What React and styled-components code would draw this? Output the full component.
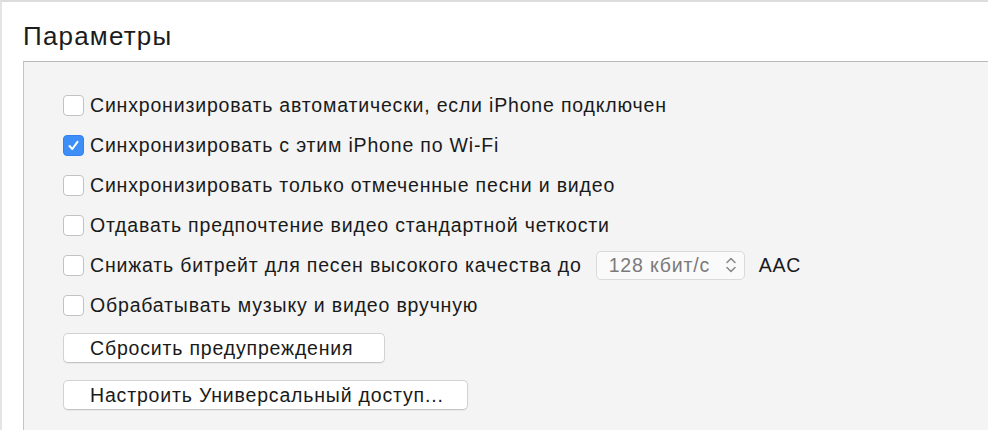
import React, { useState } from 'react';
import styled, { createGlobalStyle } from 'styled-components';

const GlobalStyle = createGlobalStyle`
  html, body {
    margin: 0;
    padding: 0;
    background: #ffffff;
    overflow: hidden;
  }
  body {
    font-family: "Liberation Sans", Arial, sans-serif;
    color: #1a1a1a;
  }
`;

const Window = styled.div`
  width: 988px;
  height: 430px;
  box-sizing: border-box;
  border-top: 2px solid #dcdcdc;
  border-left: 2px solid #e4e4e4;
  background: #ffffff;
  padding: 20px 0 0 21px;
  overflow: hidden;
`;

const Title = styled.h1`
  margin: 0 0 11px 0;
  font-size: 26px;
  font-weight: 400;
  letter-spacing: 1.2px;
  line-height: 28px;
  color: #1c1c1c;
`;

const Panel = styled.div`
  box-sizing: border-box;
  width: 1000px;
  height: 400px;
  background: #f4f4f4;
  border-top: 1px solid #b9b9b9;
  border-left: 1px solid #c4c4c4;
  padding: 23px 0 0 39px;
  display: flex;
  flex-direction: column;
`;

const Row = styled.label`
  display: flex;
  align-items: center;
  gap: 6px;
  height: 40px;
  font-size: 19.5px;
  letter-spacing: 0.82px;
  cursor: default;
`;

const Box = styled.span`
  box-sizing: border-box;
  width: 21px;
  height: 21px;
  border-radius: 4px;
  flex-shrink: 0;
  display: flex;
  align-items: center;
  justify-content: center;
  background: ${p => (p.$checked ? '#3d8ff7' : '#ffffff')};
  border: 1px solid ${p => (p.$checked ? '#3282ee' : '#c2c2c2')};
`;

const Select = styled.div`
  box-sizing: border-box;
  margin-left: 8px;
  width: 149px;
  height: 29px;
  border: 1px solid #dadada;
  border-radius: 5px;
  background: #fafafa;
  color: #7a7a7a;
  display: flex;
  align-items: center;
  justify-content: space-between;
  padding: 0 6px 0 12px;
  white-space: nowrap;
`;

const Suffix = styled.span`
  margin-left: 8px;
`;

const Buttons = styled.div`
  display: flex;
  flex-direction: column;
  align-items: flex-start;
  gap: 17px;
  margin-top: 8px;
`;

const Button = styled.button`
  box-sizing: border-box;
  height: 30px;
  width: ${p => p.$width}px;
  padding: 0 0 0 26px;
  text-align: left;
  font-family: inherit;
  font-size: 19.5px;
  letter-spacing: 0.82px;
  color: #1a1a1a;
  background: #ffffff;
  border: 1px solid #d2d2d2;
  border-bottom-color: #c4c4c4;
  border-radius: 5px;
  box-shadow: 0 1px 1px rgba(0,0,0,0.05);
  white-space: nowrap;
`;

function Check({ checked }) {
  return (
    <Box $checked={checked}>
      {checked && (
        <svg width="13" height="13" viewBox="0 0 13 13">
          <path d="M2.5 7 L5.3 10 L10.5 2.8" fill="none" stroke="#fff" strokeWidth="2" strokeLinecap="round" strokeLinejoin="round" />
        </svg>
      )}
    </Box>
  );
}

function Chevrons() {
  return (
    <svg width="14" height="20" viewBox="0 0 14 20">
      <path d="M3 7.5 L7 3.5 L11 7.5 M3 12.5 L7 16.5 L11 12.5" fill="none" stroke="#8a8a8a" strokeWidth="1.6" strokeLinecap="round" strokeLinejoin="round" />
    </svg>
  );
}

const options = [
  { id: 'auto', text: 'Синхронизировать автоматически, если iPhone подключен', checked: false },
  { id: 'wifi', text: 'Синхронизировать с этим iPhone по Wi-Fi', checked: true },
  { id: 'marked', text: 'Синхронизировать только отмеченные песни и видео', checked: false },
  { id: 'sd', text: 'Отдавать предпочтение видео стандартной четкости', checked: false },
  { id: 'bitrate', text: 'Снижать битрейт для песен высокого качества до', checked: false, select: true },
  { id: 'manual', text: 'Обрабатывать музыку и видео вручную', checked: false },
];

export default function App() {
  const [state] = useState(options);
  return (
    <>
      <GlobalStyle />
      <Window>
        <Title>Параметры</Title>
        <Panel>
          {state.map(o => (
            <Row key={o.id}>
              <Check checked={o.checked} />
              <span>{o.text}</span>
              {o.select && (
                <>
                  <Select>
                    <span>128 кбит/с</span>
                    <Chevrons />
                  </Select>
                  <Suffix>AAC</Suffix>
                </>
              )}
            </Row>
          ))}
          <Buttons>
            <Button $width={322}>Сбросить предупреждения</Button>
            <Button $width={405}>Настроить Универсальный доступ...</Button>
          </Buttons>
        </Panel>
      </Window>
    </>
  );
}
